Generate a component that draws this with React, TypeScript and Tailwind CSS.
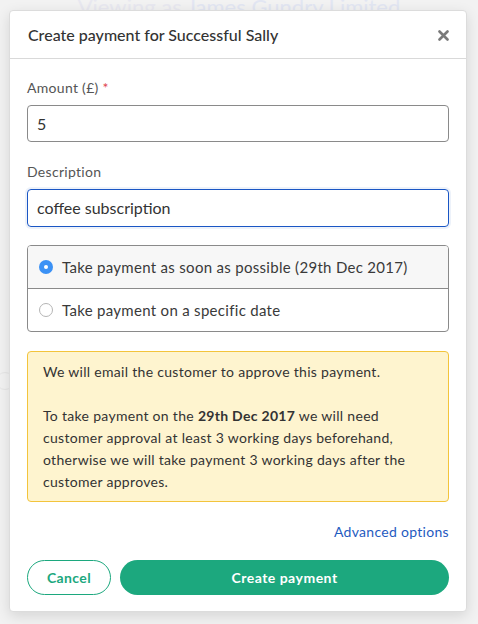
import React from "react"

const font = { fontFamily: "Lato, 'Open Sans', 'Liberation Sans', sans-serif" }

export default function App() {
  return (
    <div className="relative min-h-[624px] w-[478px] overflow-hidden bg-[#f2f2f2]" style={font}>
      {/* faint page behind the overlay */}
      <div className="absolute left-0 top-[-6px] w-full text-center text-[22px] leading-[26px] text-[#e8e8f0]">
        Viewing as <span className="text-[#e2e6f2]">James Gundry Limited</span>
      </div>
      <div className="absolute left-[-4px] top-[372px] h-[18px] w-[18px] rounded-full border border-[#e6e6e6]" />

      <div className="relative ml-[9px] mt-[10px] w-[458px] rounded-[4px] border border-[#dcdcdc] bg-white shadow-[0_4px_14px_rgba(0,0,0,0.12)]">
        {/* header */}
        <div className="flex h-[48px] items-center justify-between border-b border-[#d9d9d9] pl-[18px] pr-[17px]">
          <h2 className="text-[16px] font-medium text-[#333]">Create payment for Successful Sally</h2>
          <svg width="11" height="11" viewBox="0 0 11 11" className="mt-[1px]">
            <path d="M1.5 1.5 L9.5 9.5 M9.5 1.5 L1.5 9.5" stroke="#7a7a7a" strokeWidth="2.6" strokeLinecap="round" />
          </svg>
        </div>

        {/* body */}
        <div className="px-[17px] pb-[16px] pt-[19px] tracking-[0.3px]">
          <label className="block text-[14px] leading-[20px] text-[#555]">
            Amount (£) <span className="text-[#e0454f]">*</span>
          </label>
          <div className="mt-[7px] flex h-[37px] items-center rounded-[4px] border border-[#8a8a8a] px-[9px] text-[16px] tracking-normal text-[#333]">
            5
          </div>

          <label className="mt-[20px] block text-[14px] leading-[20px] text-[#555]">Description</label>
          <div className="mt-[7px] flex h-[38px] items-center rounded-[4px] border border-[#1a56c4] px-[9px] text-[16px] tracking-normal text-[#333] shadow-[0_0_0_2px_rgba(26,86,196,0.08)]">
            coffee subscription
          </div>

          {/* radio group */}
          <div className="mt-[18px] overflow-hidden rounded-[4px] border border-[#8a8a8a]">
            <div className="flex h-[43px] items-center gap-[9px] border-b border-[#8a8a8a] bg-[#f7f7f7] pl-[11px] text-[15px] text-[#3a3a3a]">
              <span className="flex h-[14px] w-[14px] items-center justify-center rounded-full bg-[#3b91f5]">
                <span className="h-[4px] w-[4px] rounded-full bg-white" />
              </span>
              Take payment as soon as possible (29th Dec 2017)
            </div>
            <div className="flex h-[42px] items-center gap-[9px] pl-[11px] text-[15px] text-[#3a3a3a]">
              <span className="h-[14px] w-[14px] rounded-full border border-[#b5b5b5] bg-white" />
              Take payment on a specific date
            </div>
          </div>

          {/* notice */}
          <div className="mt-[19px] rounded-[4px] border border-[#f3c43c] bg-[#fef4cf] pb-[8px] pl-[15px] pr-[12px] pt-[9px] text-[14px] leading-[22px] text-[#333]">
            <p>We will email the customer to approve this payment.</p>
            <p className="mt-[22px]">
              To take payment on the <b>29th Dec 2017</b> we will need customer approval at least 3 working days
              beforehand, otherwise we will take payment 3 working days after the customer approves.
            </p>
          </div>

          <div className="mt-[20px] flex justify-end text-[14px] leading-[20px] text-[#1f5bbf]">Advanced options</div>

          {/* actions */}
          <div className="mt-[18px] flex gap-[9px]">
            <button className="h-[35px] w-[84px] rounded-full border border-[#1ca87e] bg-white text-[14px] font-bold tracking-[0.4px] text-[#1ca87e]">
              Cancel
            </button>
            <button className="h-[35px] flex-1 rounded-full bg-[#1ca87e] text-[14px] font-bold tracking-[0.5px] text-white">
              Create payment
            </button>
          </div>
        </div>
      </div>
    </div>
  )
}
